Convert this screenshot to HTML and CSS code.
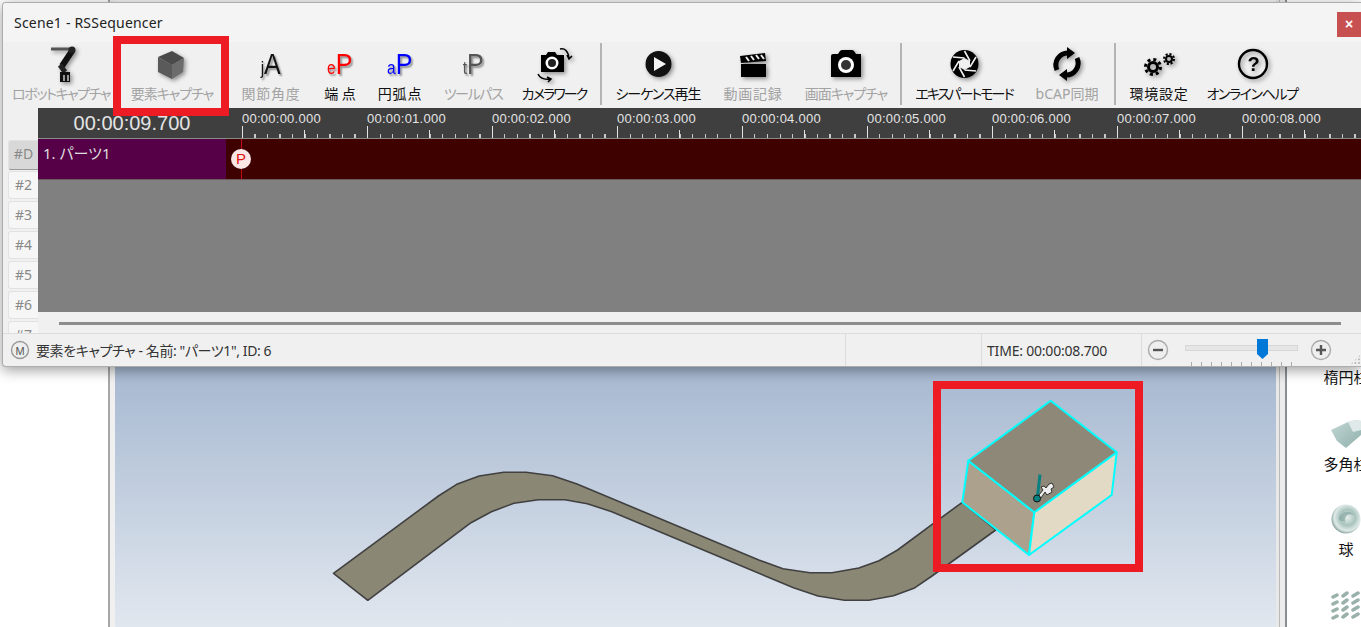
FILE: index.html
```html
<!DOCTYPE html>
<html lang="ja">

<head>
  <meta charset="UTF-8">
  <title>Scene1 - RSSequencer</title>
  <link rel="stylesheet" href="styles.css">
</head>

<body>
  <!-- application behind the sequencer window -->
  <div class="app">
    <div class="app__left"></div>
    <div class="app__frame">
      <div class="view">
        <svg class="view__canvas" width="1161" height="627" viewBox="115 0 1161 627">
          <path class="strip" d="M333.5 573.3L438.4 496L456.7 484.3L479.2 476L503.7 472.3L526 472.3L552.7 475.7L577 484L758.8 560L783 568.7L810 572.7L832 572.7L858.8 568L879 560.7L897.6 550L933.5 523.3L962.3 502.3L995.7 530L932 576L913.9 588.3L893.5 595.7L869 600.3L844.5 600.3L818 596L793.5 587.7L611.8 511.7L587.3 503.7L564.9 499.7L538.4 499.7L513.9 503.3L491.4 511.7L471 522.7L367.8 600.3Z" />
          <path class="box box--left" d="M968.3 460.7L1034.3 512.3L1029 555L962.3 502.3Z" />
          <path class="box box--right" d="M1116.7 452.3L1111.7 495L1029 555L1034.3 512.3Z" />
          <path class="box box--top" d="M1050.7 400.7L1116.7 452.3L1034.3 512.3L968.3 460.7Z" />
          <path class="pin" d="M1040 474.5L1037.3 498" />
          <circle class="pin__head" cx="1037" cy="498.5" r="3.500" />
          <path class="cursor" d="M1039 495L1043 490L1041 487L1044 486L1046 488L1049 484L1052 483L1054 487L1051 489L1052 492L1047 495L1045 492L1041 498Z" />
        </svg>
      </div>
    </div>
    <div class="app__split"></div>
    <div class="panel">
      <div class="panel__item panel__item--first">楕円柱</div>
      <div class="panel__item">
        <svg width="30" height="30" viewBox="0 0 30 30">
          <defs>
            <linearGradient id="prism" x1="0" y1="0" x2="1" y2="1">
              <stop offset="0" stop-color="#c4d8d5" />
              <stop offset="1" stop-color="#8fb0ac" />
            </linearGradient>
          </defs>
          <path fill="url(#prism)" d="M0 11L17 3L25 1L30 2L30 16L15 29L6 22Z" />
          <path fill="#dfe9e7" d="M17 3L25 1L30 2L30 11L22 13Z" />
        </svg>
        <span>多角柱</span>
      </div>
      <div class="panel__item">
        <svg width="30" height="30" viewBox="0 0 30 30">
          <defs>
            <radialGradient id="ball" cx="55%" cy="45%" r="60%">
              <stop offset="0" stop-color="#e6efec" />
              <stop offset=".45" stop-color="#a9c3bd" />
              <stop offset=".75" stop-color="#dfeae7" />
              <stop offset="1" stop-color="#6f8f88" />
            </radialGradient>
          </defs>
          <circle cx="15" cy="15" r="14.500" fill="url(#ball)" />
          <path d="M8 16C8 8 19 5 23 11C18 9 13 11 14 18" fill="#7f9f99" opacity=".6" />
        </svg>
        <span>球</span>
      </div>
      <div class="panel__item panel__item--low">
        <svg width="30" height="30" viewBox="0 0 30 30">
          <path class="pins" d="M2 6L6 4M12 5L16 2M22 5L27 2M2 13L6 11M12 12L16 9M22 12L27 9M2 20L6 18M12 19L16 16M22 19L27 16M2 27L6 25M12 26L16 23M22 26L27 23" />
        </svg>
      </div>
    </div>
  </div>

  <!-- sequencer window -->
  <div class="win">
    <div class="win__title">
      <span>Scene1 - RSSequencer</span>
      <button class="win__close">×</button>
    </div>

    <div class="tools">
      <div class="tool tool--off tool--kana">
        <svg class="ico" width="40" height="40" viewBox="0 0 40 40">
          <path d="M10 5L30 5" stroke="#555" stroke-width="3" fill="none" />
          <path d="M31 7L21 22" stroke="#111" stroke-width="6" fill="none" />
          <path d="M19 21L24 28" stroke="#222" stroke-width="5" fill="none" />
          <circle cx="31" cy="6" r="3.500" fill="#222" />
          <path d="M19 28H29V38H19Z" fill="#111" />
          <path d="M22 31H24V37H22ZM26 31H28V37H26Z" fill="#999" />
        </svg>
        <span>ロボットキャプチャ</span>
      </div>
      <div class="tool tool--off tool--mixed">
        <svg class="ico" width="40" height="40" viewBox="0 0 40 40">
          <path fill="#4a4a4a" d="M20 7L32 14L20 21L6 13Z" />
          <path fill="#5a5a5a" d="M6 13L20 21L20 35L6 28Z" />
          <path fill="#6c6c6c" d="M32 14L31 28L20 35L20 21Z" />
        </svg>
        <span>要素キャプチャ</span>
      </div>
      <div class="tool tool--off tool--kanji">
        <div class="glyph"><small>j</small>A</div>
        <span>関節角度</span>
      </div>
      <div class="tool">
        <div class="glyph glyph--red"><small>e</small>P</div>
        <span>端 点</span>
      </div>
      <div class="tool tool--kanji">
        <div class="glyph glyph--blue"><small>a</small>P</div>
        <span>円弧点</span>
      </div>
      <div class="tool tool--off tool--kana">
        <div class="glyph glyph--gray"><small>t</small>P</div>
        <span>ツールパス</span>
      </div>
      <div class="tool tool--tight">
        <svg class="ico" width="40" height="40" viewBox="0 0 40 40">
          <path d="M7 11H12L14 8H21L23 11H30V28H7Z" fill="#000" />
          <circle cx="18" cy="19" r="6.500" fill="#fff" />
          <circle cx="18" cy="19" r="4" fill="#222" />
          <path d="M26 5C31 4 34 7 35 14M33 11L35 15L38 12M4 30C6 34 10 36 16 35M13 33L17 35L14 38" stroke="#000" stroke-width="1.600" fill="none" />
        </svg>
        <span>カメラワーク</span>
      </div>
      <div class="sep"></div>
      <div class="tool tool--mixed">
        <svg class="ico" width="40" height="40" viewBox="0 0 40 40">
          <circle cx="20.500" cy="20" r="13" fill="#111" />
          <path d="M16 13L28 20L16 27Z" fill="#f4f4f4" />
        </svg>
        <span>シーケンス再生</span>
      </div>
      <div class="tool tool--off tool--kanji">
        <svg class="ico" width="40" height="40" viewBox="0 0 40 40">
          <path d="M8 20H33V33H8Z" fill="#000" />
          <path d="M7 12L32 9L33 17L8 19Z" fill="#000" />
          <path d="M13 13L16 17M18 12L21 16M23 11L26 15M28 11L31 15" stroke="#eee" stroke-width="2" />
        </svg>
        <span>動画記録</span>
      </div>
      <div class="tool tool--off tool--mixed">
        <svg class="ico" width="40" height="40" viewBox="0 0 40 40">
          <path d="M5 12Q5 10 7 10H12L14 7Q15 6 16 6H26Q27 6 28 7L30 10H35V33H5Z" fill="#000" />
          <circle cx="20" cy="21" r="8" fill="#fff" />
          <circle cx="20" cy="21" r="5" fill="#333" />
        </svg>
        <span>画面キャプチャ</span>
      </div>
      <div class="sep"></div>
      <div class="tool tool--tight">
        <svg class="ico" width="40" height="40" viewBox="0 0 40 40">
          <circle cx="20.500" cy="20" r="14" fill="#000" />
          <path d="M20.500 14L26 17V23L20.500 26L15 23V17Z" fill="#f0f0f0" />
          <path d="M20.500 7L26 17M32 13L26 23M32 27L20.500 26M20.500 33L15 23M9 27L15 17M9 13L20.500 14" stroke="#f0f0f0" stroke-width="1.600" fill="none" />
        </svg>
        <span>エキスパートモード</span>
      </div>
      <div class="tool tool--off">
        <svg class="ico" width="40" height="40" viewBox="0 0 40 40">
          <path d="M10 26A12 12 0 0 1 21 9M30 14A12 12 0 0 1 19 31" stroke="#000" stroke-width="5" fill="none" />
          <path d="M20 3L28 9L20 15ZM20 25L12 31L20 37Z" fill="#000" />
        </svg>
        <span>bCAP同期</span>
      </div>
      <div class="sep"></div>
      <div class="tool tool--kanji">
        <svg class="ico" width="40" height="40" viewBox="0 0 40 40">
          <circle cx="14" cy="23" r="4.500" fill="none" stroke="#000" stroke-width="3" />
          <circle cx="14" cy="23" r="7.500" fill="none" stroke="#000" stroke-width="3" stroke-dasharray="3 2.900" />
          <circle cx="30" cy="15" r="3" fill="none" stroke="#000" stroke-width="2" />
          <circle cx="30" cy="15" r="5" fill="none" stroke="#000" stroke-width="2" stroke-dasharray="2.100 1.800" />
        </svg>
        <span>環境設定</span>
      </div>
      <div class="tool tool--kana">
        <svg class="ico" width="40" height="40" viewBox="0 0 40 40">
          <circle cx="21" cy="20" r="14" fill="none" stroke="#000" stroke-width="2.400" />
          <text class="ico__q" x="21" y="27">?</text>
        </svg>
        <span>オンラインヘルプ</span>
      </div>
    </div>

    <div class="seq">
      <div class="seq__tabs">
        <div class="tab tab--on">#D</div>
        <div class="tab">#2</div>
        <div class="tab">#3</div>
        <div class="tab">#4</div>
        <div class="tab">#5</div>
        <div class="tab">#6</div>
        <div class="tab">#7</div>
      </div>
      <div class="seq__main">
        <div class="ruler">
          <div class="ruler__time">00:00:09.700</div>
          <div class="ruler__scale">
            <div class="mark">00:00:00.000</div>
            <div class="mark">00:00:01.000</div>
            <div class="mark">00:00:02.000</div>
            <div class="mark">00:00:03.000</div>
            <div class="mark">00:00:04.000</div>
            <div class="mark">00:00:05.000</div>
            <div class="mark">00:00:06.000</div>
            <div class="mark">00:00:07.000</div>
            <div class="mark">00:00:08.000</div>
          </div>
        </div>
        <div class="track">
          <div class="track__name">1. パーツ1</div>
          <div class="track__body">
            <div class="track__point">P</div>
          </div>
        </div>
        <div class="seq__empty"></div>
        <div class="seq__scroll">
          <div class="seq__thumb"></div>
        </div>
      </div>
    </div>

    <div class="status">
      <div class="status__cell status__cell--msg">
        <svg width="20" height="20" viewBox="0 0 20 20">
          <circle cx="10" cy="10" r="8.500" fill="#eee" stroke="#999" stroke-width="1.400" />
          <text class="status__m" x="10" y="14.500">M</text>
        </svg>
        <span>要素をキャプチャ - 名前: "パーツ1", ID: 6</span>
      </div>
      <div class="status__cell status__cell--gap"></div>
      <div class="status__cell status__cell--time">TIME: 00:00:08.700</div>
      <div class="status__cell status__cell--zoom">
        <svg width="22" height="22" viewBox="0 0 22 22">
          <circle cx="11" cy="11" r="9.500" fill="#eee" stroke="#aaa" stroke-width="1.400" />
          <path d="M6 11H16" stroke="#555" stroke-width="2.400" />
        </svg>
        <div class="slider">
          <div class="slider__track"></div>
          <div class="slider__ticks"></div>
          <svg class="slider__thumb" width="11" height="20" viewBox="0 0 11 20">
            <path d="M0 0H11V15L5.500 20L0 15Z" fill="#0078d7" />
          </svg>
        </div>
        <svg width="22" height="22" viewBox="0 0 22 22">
          <circle cx="11" cy="11" r="9.500" fill="#eee" stroke="#aaa" stroke-width="1.400" />
          <path d="M6 11H16M11 6V16" stroke="#555" stroke-width="2.400" />
        </svg>
        <div class="grip"></div>
      </div>
    </div>
  </div>

  <!-- red markers drawn on the screenshot -->
  <div class="mark-box mark-box--tool"></div>
  <div class="mark-box mark-box--part"></div>
</body>

</html>
```

FILE: styles.css
```css
html,
body {
  margin: 0;
  height: 100%;
  overflow: hidden;
}

body {
  position: relative;
  background: #fff;
  font-family: "Noto Sans", "Noto Sans CJK JP", sans-serif;
  font-feature-settings: "palt";
}

/* background application */
.app {
  display: flex;
  height: 627px;
  overflow: hidden;
}

.app__left {
  flex: none;
  width: 108px;
}

.app__frame {
  flex: none;
  width: 1168px;
  padding-left: 5px;
  box-sizing: border-box;
  border-left: 2px solid #a6a6a6;
  background: #f0f0f0;
}

.view {
  height: 627px;
  background: linear-gradient(#f4f4f4 0 300px, #a6b8d0 300px 366px, #e1e7ef 627px);
}

.view__canvas {
  display: block;
}

.strip {
  fill: #8b8775;
  stroke: #404040;
  stroke-width: 1.600;
  stroke-linejoin: round;
}

.box {
  stroke: #00ffff;
  stroke-width: 2;
  stroke-linejoin: round;
}

.box--top {
  fill: #8d8878;
}

.box--left {
  fill: #aba18d;
}

.box--right {
  fill: #e3dac5;
}

.pin {
  fill: none;
  stroke: #0a8080;
  stroke-width: 3;
}

.pin__head {
  fill: #0a8080;
  stroke: #111;
}

.cursor {
  fill: #eee;
  stroke: #111;
  stroke-width: .8;
}

.app__split {
  flex: none;
  width: 11px;
  box-sizing: border-box;
  background: linear-gradient(90deg, #e8e8e8 0 3px, #b9b9b9 3px 4px, #ececec 4px 9px, #8a8f94 9px 11px);
}

.panel {
  flex: none;
  width: 118px;
  padding-top: 367px;
  font-size: 15px;
  line-height: 20px;
  color: #111;
  white-space: nowrap;
}

.panel__item {
  display: flex;
  flex-direction: column;
  align-items: center;
  height: 85px;
  gap: 5px;
}

.panel__item--first {
  display: block;
  height: 52px;
  text-align: center;
}

.panel__item--low {
  padding-top: 2px;
}

.panel__item svg {
  flex: none;
}

.pins {
  fill: none;
  stroke: #9ab0aa;
  stroke-width: 3.500;
  stroke-linecap: round;
}

/* sequencer window */
.win {
  position: absolute;
  left: 2px;
  top: 2px;
  width: 1359px;
  height: 365px;
  box-sizing: border-box;
  border: 1px solid #adadad;
  border-right: 0;
  border-radius: 4px 0 0 4px;
  background: #f0f0f0;
  box-shadow: 0 3px 14px rgba(0, 0, 0, .4);
  display: flex;
  flex-direction: column;
  overflow: hidden;
}

.win__title {
  flex: none;
  display: flex;
  align-items: center;
  justify-content: space-between;
  height: 39px;
  padding-left: 11px;
  box-sizing: border-box;
  background: #f4f4f4;
  font-size: 14px;
  letter-spacing: .2px;
  color: #222;
}

.win__close {
  align-self: flex-start;
  width: 24px;
  height: 25px;
  margin-top: 9px;
  padding: 0;
  border: 0;
  background: #c75050;
  color: #fff;
  font: bold 14px/25px "Liberation Sans", sans-serif;
}

.tools {
  flex: none;
  display: grid;
  grid-template-columns: 106px 116px 82px 56px 64px 82px 80px 14px 100px 90px 96px 14px 112px 94px 2px 86px 100px;
  height: 66px;
  padding-left: 5px;
  box-sizing: border-box;
}

.tool {
  display: flex;
  flex-direction: column;
  align-items: center;
  padding-top: 2px;
  font-size: 14px;
  line-height: 20px;
  color: #111;
  white-space: nowrap;
}

.tool--off {
  color: #a3a3a3;
}

/* カナは詰める, 漢字は少し開ける */
.tool--kana {
  letter-spacing: -1.400px;
}

.tool--tight {
  letter-spacing: -1.900px;
}

.tool--mixed {
  letter-spacing: -1px;
}

.tool--kanji {
  letter-spacing: .8px;
}

.ico {
  display: block;
  flex: none;
  filter: drop-shadow(2px 2px 2px rgba(0, 0, 0, .4));
}

.ico__q {
  font: bold 20px "Liberation Sans", sans-serif;
  text-anchor: middle;
  fill: #000;
}

.glyph {
  height: 40px;
  font: 29px/40px "Liberation Sans", sans-serif;
  letter-spacing: 0;
  color: #111;
  text-shadow: 2px 2px 2px rgba(0, 0, 0, .4);
  transform: scaleX(.86);
}

.glyph small {
  font-size: 18px;
}

.glyph--red {
  color: #ff0000;
}

.glyph--blue {
  color: #0000ff;
}

.glyph--gray {
  color: #555;
}

.sep {
  justify-self: center;
  width: 2px;
  height: 62px;
  margin-top: 1px;
  background: #b4b4b4;
}

.seq {
  flex: none;
  display: flex;
  height: 225px;
  overflow: hidden;
}

.seq__tabs {
  flex: none;
  width: 35px;
  padding: 33px 0 0 5px;
  box-sizing: border-box;
}

.tab {
  height: 28px;
  margin-bottom: 2px;
  border-radius: 3px 0 0 3px;
  border: 1px solid #e2e2e2;
  border-right: 0;
  box-sizing: border-box;
  background: #f6f6f6;
  font-size: 14px;
  line-height: 26px;
  text-align: center;
  color: #888;
}

.tab--on {
  height: 30px;
  margin-top: -1px;
  margin-bottom: 1px;
  background: #d8d8d8;
  border-bottom: 1px solid #999;
}

.seq__main {
  flex: 1;
  display: flex;
  flex-direction: column;
  min-width: 0;
}

.ruler {
  flex: none;
  display: flex;
  height: 31px;
  box-sizing: border-box;
  border-bottom: 1px solid #8a8a8a;
  background: #3f3f3f;
  color: #e4e4e4;
  font-family: "Liberation Sans", sans-serif;
}

.ruler__time {
  flex: none;
  width: 188px;
  margin-right: 16px;
  font-size: 20px;
  line-height: 30px;
  text-align: center;
}

.ruler__scale {
  display: flex;
}

/* 1秒125px: long tick, half second tick, 12.5px small ticks */
.mark {
  flex: none;
  width: 125px;
  height: 30px;
  font-size: 13px;
  letter-spacing: .25px;
  line-height: 22px;
  white-space: nowrap;
  background-image: linear-gradient(#e4e4e4, #e4e4e4), linear-gradient(#e4e4e4, #e4e4e4), repeating-linear-gradient(90deg, #c8c8c8 0 1px, transparent 1px 12.5px);
  background-size: 1px 12px, 1px 8px, 100% 4px;
  background-position: 0 100%, 62px 100%, 0 100%;
  background-repeat: no-repeat;
}

.track {
  flex: none;
  display: flex;
  height: 41px;
  box-sizing: border-box;
  border-bottom: 1px solid #6e5a5a;
}

.track__name {
  flex: none;
  width: 188px;
  padding-left: 5px;
  box-sizing: border-box;
  background: #560047;
  color: #ddd;
  font-size: 15px;
  line-height: 28px;
}

.track__body {
  flex: 1;
  position: relative;
  background: #3f0000;
}

.track__body::before {
  content: "";
  position: absolute;
  left: 15px;
  top: 0;
  bottom: 0;
  width: 1px;
  background: #c01010;
}

.track__point {
  position: absolute;
  left: 5px;
  top: 10px;
  width: 20px;
  height: 20px;
  border-radius: 50%;
  background: #fbe6e6;
  color: #e01010;
  font: 15px/20px "Liberation Sans", sans-serif;
  text-align: center;
}

.seq__empty {
  flex: 1;
  background: #808080;
}

.seq__scroll {
  flex: none;
  height: 21px;
  padding: 10px 20px 0 21px;
  box-sizing: border-box;
  background: #f0f0f0;
}

.seq__thumb {
  height: 3px;
  background: #8c8c8c;
}

.status {
  flex: none;
  display: flex;
  height: 33px;
  box-sizing: border-box;
  border-top: 1px solid #dcdcdc;
  font-size: 14px;
  color: #333;
}

.status__cell {
  flex: none;
  display: flex;
  align-items: center;
  box-sizing: border-box;
  white-space: nowrap;
}

.status__cell--msg {
  width: 842px;
  padding-left: 7px;
  gap: 6px;
  letter-spacing: -.4px;
}

.status__cell--gap {
  width: 136px;
  border-left: 1px solid #dcdcdc;
}

.status__cell--time {
  width: 160px;
  padding-left: 5px;
  border-left: 1px solid #dcdcdc;
  letter-spacing: -.2px;
}

.status__cell--zoom {
  flex: 1;
  position: relative;
  border-left: 1px solid #dcdcdc;
  padding-left: 5px;
}

.status__m {
  font: 11px "Liberation Sans", sans-serif;
  letter-spacing: 0;
  text-anchor: middle;
  fill: #555;
}

.slider {
  position: relative;
  width: 113px;
  height: 32px;
  margin: 0 12px 0 16px;
}

.slider__track {
  position: absolute;
  left: 0;
  right: 0;
  top: 11px;
  height: 4px;
  border: 1px solid #d6d6d6;
  background: #e6e6e6;
}

.slider__ticks {
  position: absolute;
  left: 6px;
  right: 6px;
  bottom: 0;
  height: 4px;
  background: repeating-linear-gradient(90deg, #aaa 0 1px, transparent 1px 10px);
}

.slider__thumb {
  position: absolute;
  left: 72px;
  top: 5px;
}

.grip {
  position: absolute;
  right: 0;
  bottom: 1px;
  width: 11px;
  height: 11px;
  background: radial-gradient(circle, #bbb 1px, transparent 1.2px) 0 0 / 3.600px 3.600px;
  clip-path: polygon(100% 0, 100% 100%, 0 100%);
}

/* red frames */
.mark-box {
  position: absolute;
  box-sizing: border-box;
  border: 8px solid #ed1c24;
}

.mark-box--tool {
  left: 113px;
  top: 36px;
  width: 116px;
  height: 80px;
}

.mark-box--part {
  left: 933px;
  top: 381px;
  width: 210px;
  height: 191px;
}
```
